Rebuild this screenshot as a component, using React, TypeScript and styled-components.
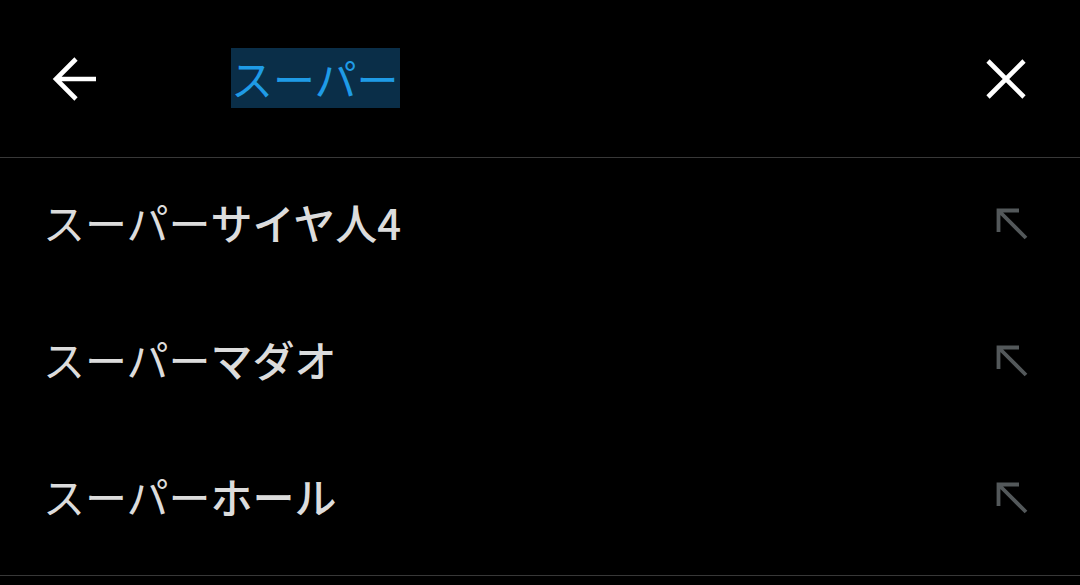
import React from "react";
import styled, { createGlobalStyle } from "styled-components";

const Global = createGlobalStyle`
  html, body { margin: 0; padding: 0; background: #000; }
  body { font-family: "Noto Sans CJK JP", "Noto Sans", sans-serif; }
`;

const Page = styled.div`
  width: 1080px;
  height: 585px;
  background: #000;
  overflow: hidden;
`;

const Header = styled.div`
  height: 157px;
  display: flex;
  align-items: center;
  border-bottom: 1px solid #383838;
  box-sizing: content-box;
`;

const IconButton = styled.div<{ $ml: number; $mr?: number }>`
  width: 48px;
  height: 48px;
  margin-left: ${(p) => p.$ml}px;
  margin-right: ${(p) => p.$mr ?? 0}px;
  display: flex;
  align-items: center;
  justify-content: center;
  flex-shrink: 0;
`;

const Query = styled.div`
  flex: 1;
  margin-left: 133px;
  display: flex;
  align-items: center;
`;

const Highlight = styled.span`
  background: #0a2e48;
  color: #1f9be6;
  font-size: 42px;
  line-height: 60px;
  height: 60px;
  display: inline-block;
  padding: 0 1px 0 0;
  margin-top: -2px;
`;

const List = styled.div`
  display: flex;
  flex-direction: column;
  padding-bottom: 6px;
`;

const Row = styled.div`
  height: 137px;
  display: flex;
  align-items: center;
  padding-left: 43px;
  padding-right: 50px;
  padding-bottom: 10px;
  box-sizing: border-box;
`;

const Label = styled.div`
  flex: 1;
  color: #dcdcdc;
  font-size: 42px;
  line-height: 56px;
  white-space: nowrap;
`;

const Bold = styled.span`
  font-weight: 500;
`;

const Arrow = styled.svg`
  margin-top: 4px;
`;

const BottomRule = styled.div`
  height: 1px;
  background: #383838;
`;

const Back = () => (
  <svg width="48" height="48" viewBox="0 0 48 48">
    <path d="M46 24H6M26 4L6 24l20 20" fill="none" stroke="#fff" strokeWidth="4.6" />
  </svg>
);

const Close = () => (
  <svg width="48" height="48" viewBox="0 0 48 48">
    <path d="M6 6L42 42M42 6L6 42" fill="none" stroke="#fff" strokeWidth="4.6" />
  </svg>
);

const NorthWest = () => (
  <Arrow width="36" height="36" viewBox="0 0 36 36">
    <path d="M4.5 26V4.5H25M4.5 4.5L32 32" fill="none" stroke="#53585a" strokeWidth="3.8" />
  </Arrow>
);

const items: { base: string; rest: string }[] = [
  { base: "スーパー", rest: "サイヤ人4" },
  { base: "スーパー", rest: "マダオ" },
  { base: "スーパー", rest: "ホール" },
];

export default function App() {
  return (
    <Page>
      <Global />
      <Header>
        <IconButton $ml={50}>
          <Back />
        </IconButton>
        <Query>
          <Highlight>スーパー</Highlight>
        </Query>
        <IconButton $ml={0} $mr={50}>
          <Close />
        </IconButton>
      </Header>
      <List>
        {items.map((it, i) => (
          <Row key={i}>
            <Label>
              {it.base}
              <Bold>{it.rest}</Bold>
            </Label>
            <NorthWest />
          </Row>
        ))}
      </List>
      <BottomRule />
    </Page>
  );
}
